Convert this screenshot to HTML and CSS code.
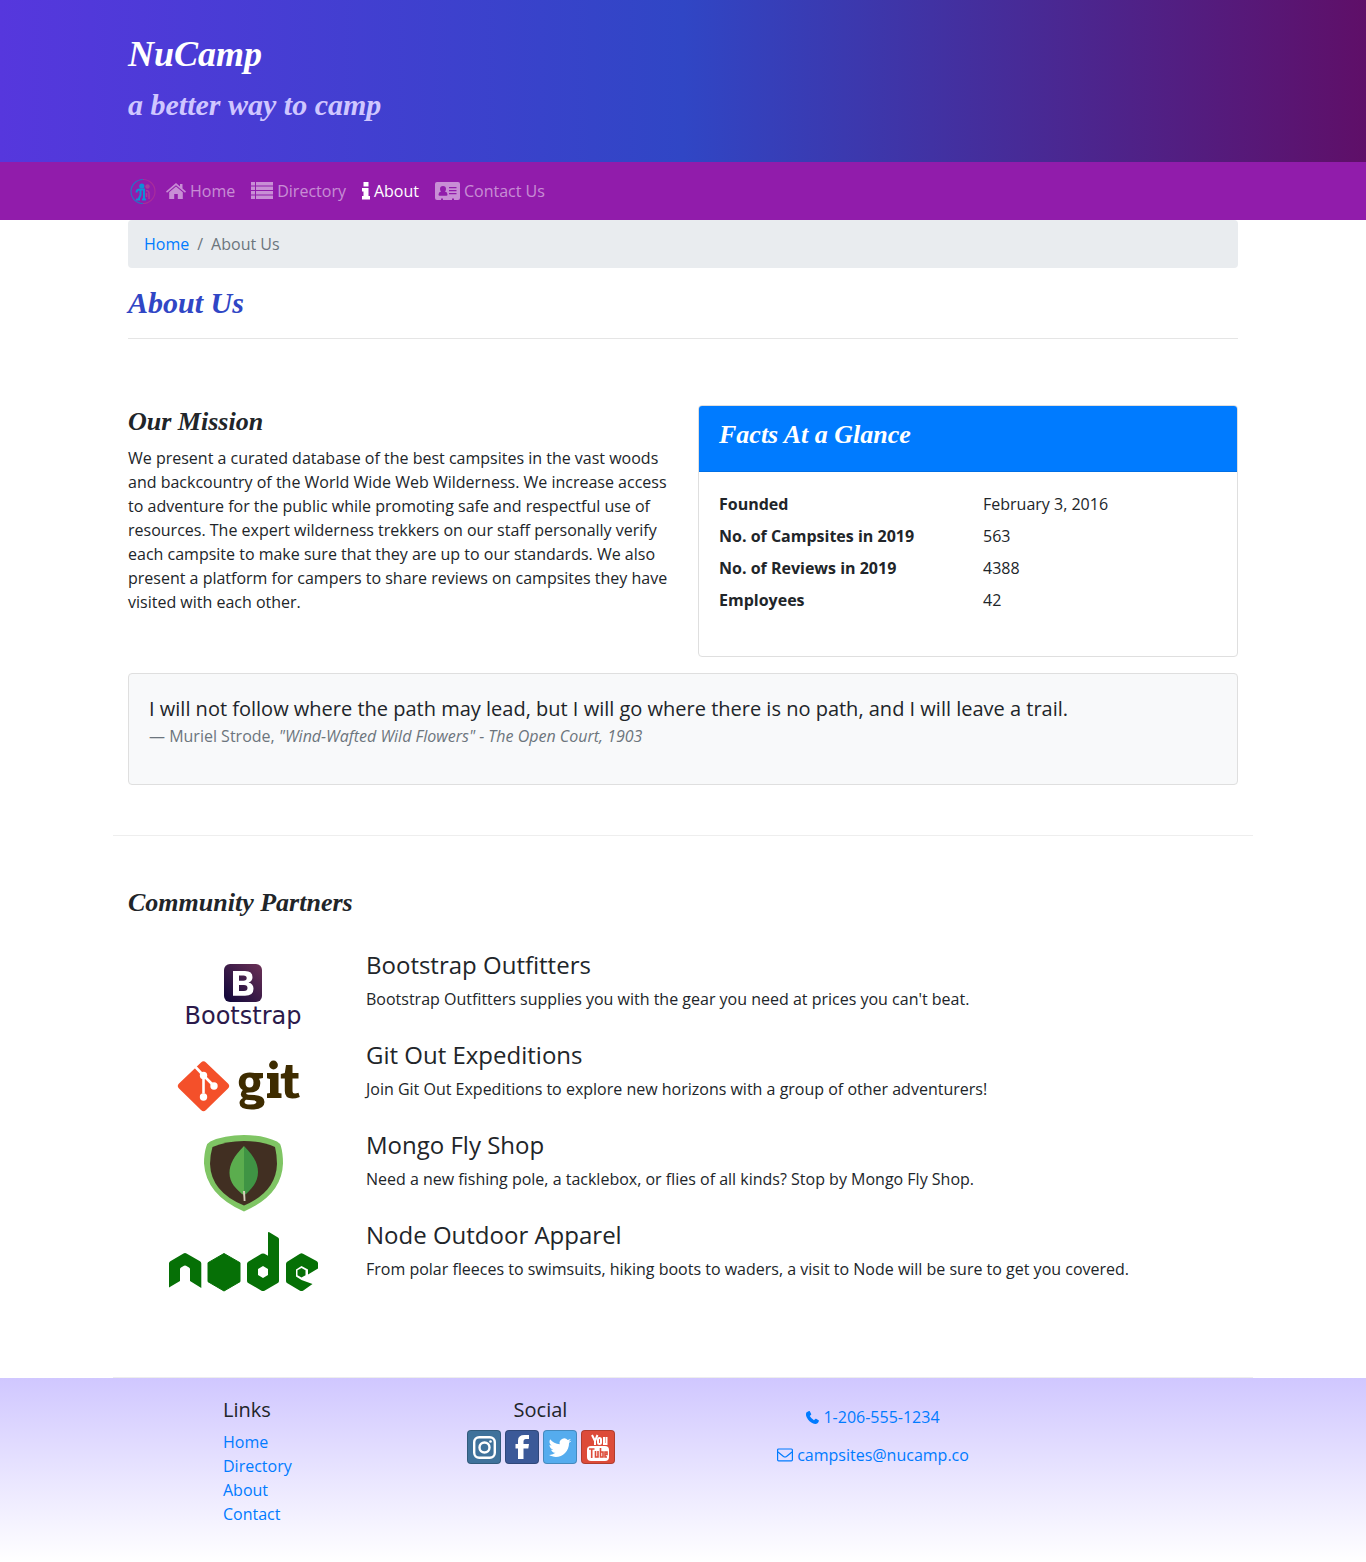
FILE: index.html
```html
<!DOCTYPE html>
<html lang="en">
<head>
<meta charset="utf-8">
<meta name="viewport" content="width=device-width, initial-scale=1">
<title>NuCamp: About Us</title>
<link rel="stylesheet" href="styles.css">
</head>
<body>
<header class="hero">
  <div class="container">
    <h1>NuCamp</h1>
    <h2>a better way to camp</h2>
  </div>
</header>
<nav class="navbar">
  <div class="container nav-inner">
    <a class="brand" href="#" aria-label="NuCamp">
      <svg width="30" height="30" viewBox="0 0 30 30" fill="none">
        <path d="M15 3.500a12 12 0 0 0 0 24" stroke="#2b6fc4" stroke-width="1.200"/>
        <path d="M15 3.500a12 12 0 0 1 0 24" stroke="#a82c9c" stroke-width="1.200"/>
        <circle cx="13.800" cy="10" r="2.600" fill="#0f8fd6"/>
        <path d="M8.500 16.500q0-3 3-3h4.500V23M12.500 14v5l-2 4.500M8 23.500h4M14 23.500h4" stroke="#0f8fd6" stroke-width="2"/>
        <circle cx="19.500" cy="10.500" r="2.200" fill="#a83c9c"/>
        <path d="M18 14.500q3 0 3 3v5.500M18.500 17v4" stroke="#a83c9c" stroke-width="1.500"/>
      </svg>
    </a>
    <ul class="nav-list">
      <li><a href="#"><svg width="20" height="18" viewBox="0 0 20 18" fill="currentColor"><path d="M10 1l4 3.400V2h2.500v4.500L20 9.500l-1 1.200-9-7.500-9 7.500L0 9.500z"/><path d="M10 4.600l6.800 5.700V17h-5v-5H8.200v5h-5v-6.700z"/></svg> Home</a></li>
      <li><a href="#"><svg width="22" height="18" viewBox="0 0 22 18" fill="currentColor"><path d="M0 0h4v3.500H0zM5 0h17v3.500H5zM0 4.500h4V8H0zM5 4.500h17V8H5zM0 9h4v3.500H0zM5 9h17v3.500H5zM0 13.500h4V17H0zM5 13.500h17V17H5z"/></svg> Directory</a></li>
      <li><a class="active" href="#" aria-current="page"><svg width="8" height="18" viewBox="0 0 8 18" fill="currentColor"><path d="M1.500 0h5v4.500h-5zM0 6h6.500v8H8v3.500H0V14h1.500V9.500H0z"/></svg> About</a></li>
      <li><a href="#"><svg width="25" height="20" viewBox="0 0 25 20" fill="currentColor"><path fill-rule="evenodd" d="M2 1h21a2 2 0 0 1 2 2v14a2 2 0 0 1-2 2h-4v-1.500h-2V19H8v-1.500H6V19H2a2 2 0 0 1-2-2V3a2 2 0 0 1 2-2zM8 5a3 3 0 0 0-3 3q0 1.700 1 2.500-2.500.5-2.500 3 0 1.200 1 1.200h7q1 0 1-1.200 0-2.500-2.500-3 1-1 1-2.500a3 3 0 0 0-3-3zM14 6v1.300h7.500V6zM14 9v1.300h7.500V9zM14 12v1.300h7.500V12z"/></svg> Contact Us</a></li>
    </ul>
  </div>
</nav>
<main class="container">
  <nav aria-label="breadcrumb">
    <ol class="breadcrumb"><li><a href="#">Home</a></li><li>About Us</li></ol>
  </nav>
  <h2 class="page-title">About Us</h2>
  <hr>
  <section class="row-content">
    <div class="intro">
      <div>
        <h3>Our Mission</h3>
        <p>We present a curated database of the best campsites in the vast woods and backcountry of the World Wide Web Wilderness. We increase access to adventure for the public while promoting safe and respectful use of resources. The expert wilderness trekkers on our staff personally verify each campsite to make sure that they are up to our standards. We also present a platform for campers to share reviews on campsites they have visited with each other.</p>
      </div>
      <div class="card">
        <div class="card-header"><h3>Facts At a Glance</h3></div>
        <dl class="facts">
          <dt>Founded</dt><dd>February 3, 2016</dd>
          <dt>No. of Campsites in 2019</dt><dd>563</dd>
          <dt>No. of Reviews in 2019</dt><dd>4388</dd>
          <dt>Employees</dt><dd>42</dd>
        </dl>
      </div>
    </div>
    <blockquote class="card quote">
      <p>I will not follow where the path may lead, but I will go where there is no path, and I will leave a trail.</p>
      <footer>— Muriel Strode, <cite>"Wind-Wafted Wild Flowers" - The Open Court, 1903</cite></footer>
    </blockquote>
  </section>
  <section class="row-content">
    <h3>Community Partners</h3>
    <ul class="partners">
      <li>
        <svg width="170" height="90" viewBox="0 0 170 90" role="img" aria-label="Bootstrap">
          <defs><linearGradient id="bs" x1="0" y1="1" x2="1" y2="0"><stop offset=".1" stop-color="#160a3c"/><stop offset="1" stop-color="#6b3156"/></linearGradient></defs>
          <rect x="64" y="13" width="38" height="38" rx="6" fill="url(#bs)"/>
          <path fill="#fff" fill-rule="evenodd" d="M73 20h12q7.500 0 7.500 6.300 0 4-4 5.200 5 1.200 5 6.200 0 7-8.500 7H73zM79 24.500v5.200h4.500q3.200 0 3.200-2.700 0-2.500-3.200-2.500zM79 34v6h5q3.500 0 3.500-3T84 34z"/>
          <text class="bs-word" x="83" y="73" text-anchor="middle">Bootstrap</text>
        </svg>
        <div><h4>Bootstrap Outfitters</h4><p>Bootstrap Outfitters supplies you with the gear you need at prices you can't beat.</p></div>
      </li>
      <li>
        <svg width="170" height="90" viewBox="0 0 170 90" role="img" aria-label="git">
          <path d="M41 21.500q2.500-2.500 5 0L68 42.500q2.500 2.500 0 5L46 69q-2.500 2.500-5 0L19 47.500q-2.500-2.500 0-5z" fill="#f4502a"/>
          <path d="M35.500 26l8 8.500v18M43.500 34.500L54 45" fill="none" stroke="#fff" stroke-width="2.600"/>
          <g fill="#fff"><circle cx="43.500" cy="34.500" r="3.700"/><circle cx="54" cy="45" r="3.700"/><circle cx="43.500" cy="56" r="3.700"/></g>
          <g fill="#3e2c00">
            <path fill-rule="evenodd" d="M103 32v5l-4 .7q1.300 2 1.300 4.300 0 9.500-10.800 9.500-2 0-3 .2-1.200 1.800 2 2l6 .3q10 .6 10 7 0 7.500-13 7.500-12 0-12-6.500 0-3 3.500-5-4.300-3.200-.2-8-4-2.300-4-7 0-10.500 11-10.500 3 0 5 .5zM89.500 36.500q-4 0-4 5t4 5 4-5-4-5zM86 58.700q-1.500 1-1.500 2.200 0 2.600 6 2.600t6-2.500q0-1.500-4-1.800z"/>
            <circle cx="113.500" cy="24" r="4.400"/>
            <path d="M107 32h11.500v20l3 .6V57H107v-4.400l3-.6V38l-3-.8zM126 24h6.500v8h6v5.500h-6V50q0 2.500 2.500 2.500 1.500 0 3.500-.8l1.300 4.300q-4 1.500-7.500 1.500-7.500 0-7.500-7.500V37.500h-4V33l4-1z"/>
          </g>
        </svg>
        <div><h4>Git Out Expeditions</h4><p>Join Git Out Expeditions to explore new horizons with a group of other adventurers!</p></div>
      </li>
      <li>
        <svg width="170" height="90" viewBox="0 0 170 90" role="img" aria-label="MongoDB">
          <path d="M84 4Q104 4 117 10.500q3 1.500 4 5 2 7 2 17Q122 64 84 80.500 46 64 44 32.500q0-10 2.300-17 1-3.500 4-5Q64 4 84 4z" fill="#7fc564"/>
          <path d="M84 10q18 0 31 6 2 8 2 17-1 28-33 41.500Q51 61 50 33q0-9 2.500-17Q66 10 84 10z" fill="#412f22"/>
          <path d="M84 15C74 25 69.500 33 69.500 42c0 10 7 16 12.500 21l2 1z" fill="#5bad4e"/>
          <path d="M84 15c9 9 14 17 14 26 0 11-7 17-12 22l-2 1z" fill="#3f9444"/>
          <path d="M83 60h2l.5 10h-1.800z" fill="#d8cfbd"/>
        </svg>
        <div><h4>Mongo Fly Shop</h4><p>Need a new fishing pole, a tacklebox, or flies of all kinds? Stop by Mongo Fly Shop.</p></div>
      </li>
      <li>
        <svg width="170" height="90" viewBox="0 0 170 90" role="img" aria-label="node">
          <g fill="#067006">
            <path d="M9 42.500q0-1.500 1.300-2.300L23.500 32.500q1.500-.8 3 0L40 40.200q1.300.8 1.300 2.300V67L30 60V48q0-1-1-1.600l-3-1.700q-1-.5-2 0l-3 1.700q-1 .6-1 1.600v12L9 66.500z"/>
            <path d="M64 32.500l16 9.200v19L64 70l-16-9.300v-19z" stroke="#067006" stroke-linejoin="round"/>
            <path fill-rule="evenodd" d="M108 12q0-1.500 1.300-.8L118 16.500q1 .6 1 1.800V60q0 1.300-1.200 2L104.500 69.700q-1.500.8-3 0L88.200 62Q87 61.300 87 60V43q0-1.500 1.200-2.200l13.300-8q1.500-.8 3 0l3.500 2zM103 45l-5 3v6l5 3 5-3v-6z"/>
            <path fill-rule="evenodd" d="M140 32.700q1.500-.8 3 0L156.500 40q1.500.8 1.500 2.300v5.200L148 53.500v-5L141.500 45l-5.500 3.500v7l5.500 3.500 11 4L143 69.700q-1.500.8-3 0L127 62q-1-.7-1-2V43q0-1.500 1.200-2.200z"/>
            <path d="M141.500 47l4 2.300v4.900l-4 2.300-4-2.300v-4.900z"/>
          </g>
        </svg>
        <div><h4>Node Outdoor Apparel</h4><p>From polar fleeces to swimsuits, hiking boots to waders, a visit to Node will be sure to get you covered.</p></div>
      </li>
    </ul>
  </section>
</main>
<footer class="site-footer">
  <div class="footer-grid">
    <div class="links">
      <h5>Links</h5>
      <ul><li><a href="#">Home</a></li><li><a href="#">Directory</a></li><li><a href="#">About</a></li><li><a href="#">Contact</a></li></ul>
    </div>
    <div class="social">
      <h5>Social</h5>
      <div class="social-icons">
        <a class="instagram" href="#" aria-label="Instagram"><svg width="32" height="32" viewBox="0 0 32 32" fill="none" stroke="#fff" stroke-width="2.400"><rect x="6.200" y="6.200" width="20.600" height="20.600" rx="5"/><circle cx="16.500" cy="16.500" r="5"/><circle cx="22.500" cy="10.500" r="1.300" fill="#fff" stroke="none"/></svg></a>
        <a class="facebook" href="#" aria-label="Facebook"><svg width="32" height="32" viewBox="0 0 32 32" fill="#fff"><path d="M23 4v4h-3q-2.500 0-2.500 2.500V13H23l-.7 4.500h-4.800V28H12V17.500H9.500V13H12V9.500Q12 4 18.500 4z"/></svg></a>
        <a class="twitter" href="#" aria-label="Twitter"><svg width="32" height="32" viewBox="0 0 24 24" fill="#fff"><path d="M20.500 7.300c-.6.300-1.300.5-2 .5.700-.4 1.300-1.100 1.500-1.900-.7.400-1.400.7-2.200.8a3.500 3.500 0 0 0-6 3.200C8.900 9.800 6.300 8.400 4.600 6.200c-.9 1.600-.5 3.600 1.100 4.700-.6 0-1.100-.2-1.600-.4 0 1.700 1.200 3.100 2.800 3.400-.5.100-1 .2-1.600.1.500 1.400 1.800 2.400 3.300 2.400A7 7 0 0 1 3.500 17.900c6.600 4.200 15.400-.2 15.300-9 .7-.4 1.300-1 1.700-1.600z"/></svg></a>
        <a class="youtube" href="#" aria-label="YouTube"><svg width="32" height="32" viewBox="0 0 32 32"><rect x="5" y="15" width="22" height="15" rx="4" fill="#fff"/><g fill="none" stroke="#fff" stroke-width="2"><path d="M10 4l3 6 2.500-6M13 9v5"/><rect x="16" y="7" width="3" height="6" rx="1.500"/><path d="M22 6v7h2.500V6"/></g><g fill="none" stroke="#dd4b39" stroke-width="1.600"><path d="M7 18h5.500M9.700 18v9M13.500 20v6H16v-6M18.500 17v9H21v-5h-2.500M25 26h-2v-5h2v2.500h-2"/></g></svg></a>
      </div>
    </div>
    <div class="contact">
      <a href="tel:+12065551234"><svg width="13" height="13" viewBox="0 0 13 13" fill="currentColor"><path d="M.6 1.300L3 0q.5-.2.8.3l1.400 2.600q.2.500-.2.900L3.800 5q1.500 2.800 4.200 4.200l1.200-1.300q.4-.4.900-.1l2.500 1.400q.5.300.3.800-.9 3-3.700 3Q5 12.400 2 8.500-.8 4.800.2 2z"/></svg> 1-206-555-1234</a>
      <a href="mailto:campsites@nucamp.co"><svg width="16" height="14" viewBox="0 0 16 14" fill="none" stroke="currentColor" stroke-width="1.200"><rect x=".6" y="1" width="14.800" height="11.800" rx="1"/><path d="M1 4l5.500 4.500q1.500 1 3 0L15 4"/></svg> campsites@nucamp.co</a>
    </div>
  </div>
</footer>
</body>
</html>
```
FILE: styles.css
```css
*, *::before, *::after { box-sizing: border-box; }
body {
  margin: 0;
  font: 16px/24px "Open Sans", sans-serif;
  color: #212529;
  background: #fff;
}
h1, h2, h3, h4, h5, p, ul, ol, dl, dd, blockquote { margin: 0; padding: 0; }
ul, ol { list-style: none; }
a { color: #007bff; text-decoration: none; }
svg { flex: none; }
h1, h2, h3 { font-family: "Liberation Serif", serif; font-style: italic; font-weight: 700; margin-bottom: 8px; }
h1 { font-size: 36px; line-height: 48px; }
h2 { font-size: 30px; line-height: 38px; }
h3 { font-size: 26px; line-height: 33px; }
h4 { font-size: 24px; line-height: 28px; font-weight: 400; margin-bottom: 8px; }
h5 { font-size: 20px; line-height: 24px; font-weight: 400; margin-bottom: 8px; }

.container { max-width: 1140px; margin: 0 auto; padding: 0 15px; }
.hero {
  padding: 30px 0;
  color: #fff;
  background: linear-gradient(90deg, #5637dd, #3046c5 50%, #5f0f68);
}
.hero h2 { color: #cfc6ff; }

.navbar { background: #911cab; padding: 8px 0; }
.nav-inner { display: flex; align-items: center; min-height: 42px; }
.brand { display: flex; }
.nav-list { display: flex; }
.nav-list a {
  display: flex;
  align-items: center;
  gap: 4px;
  padding: 8px;
  color: rgba(255, 255, 255, .5);
}
.nav-list a.active { color: #fff; }

.breadcrumb {
  display: flex;
  padding: 12px 16px;
  margin-bottom: 16px;
  border-radius: 4px;
  background: #e9ecef;
  color: #6c757d;
}
.breadcrumb li + li::before { content: "/"; padding: 0 8px; }
.page-title { color: #3046c5; }
hr { margin: 16px 0; border: 0; border-top: 1px solid #e5e5e5; }

.row-content {
  margin: 0 -15px;
  padding: 50px 15px;
  border-bottom: 1px solid #eee;
}
.intro {
  display: grid;
  grid-template-columns: 1fr 1fr;
  gap: 30px;
  margin-bottom: 16px;
}
.card { border: 1px solid #dfdfdf; border-radius: 4px; }
.card-header {
  padding: 12px 20px;
  border-bottom: 1px solid #006fe6;
  border-radius: 3px 3px 0 0;
  background: #007bff;
  color: #fff;
}
.facts {
  display: grid;
  grid-template-columns: 1fr 1fr;
  gap: 8px 30px;
  padding: 20px 20px 44px;
}
.facts dt { font-weight: 700; }
.quote { padding: 20px 20px 36px; background: #f8f9fa; }
.quote p { font-size: 20px; line-height: 30px; }
.quote footer { color: #6c757d; }

.partners { padding: 24px 0 16px; }
.partners li { display: flex; gap: 36px; padding-left: 32px; }
.bs-word { font: 24px "DejaVu Sans", sans-serif; fill: #2b1a4b; }

.site-footer { padding: 20px 0; background: linear-gradient(#d0c7ff, #fff); }
.footer-grid {
  display: grid;
  grid-template-columns: 1fr 2fr 3fr 4fr 2fr;
  max-width: 1140px;
  margin: 0 auto;
}
.links { grid-column: 2; padding: 0 15px 16px; }
.social { text-align: center; }
.social-icons { display: flex; justify-content: center; gap: 4px; }
.social-icons a {
  display: flex;
  width: 34px;
  height: 34px;
  border: 1px solid rgba(0, 0, 0, .2);
  border-radius: 4px;
}
.instagram { background: #3f729b; }
.facebook { background: #3b5998; }
.twitter { background: #55acee; }
.youtube { background: #dd4b39; }
.contact { display: flex; flex-direction: column; align-items: center; }
.contact a { display: flex; align-items: center; gap: 4px; padding: 7px 12px; }
```
